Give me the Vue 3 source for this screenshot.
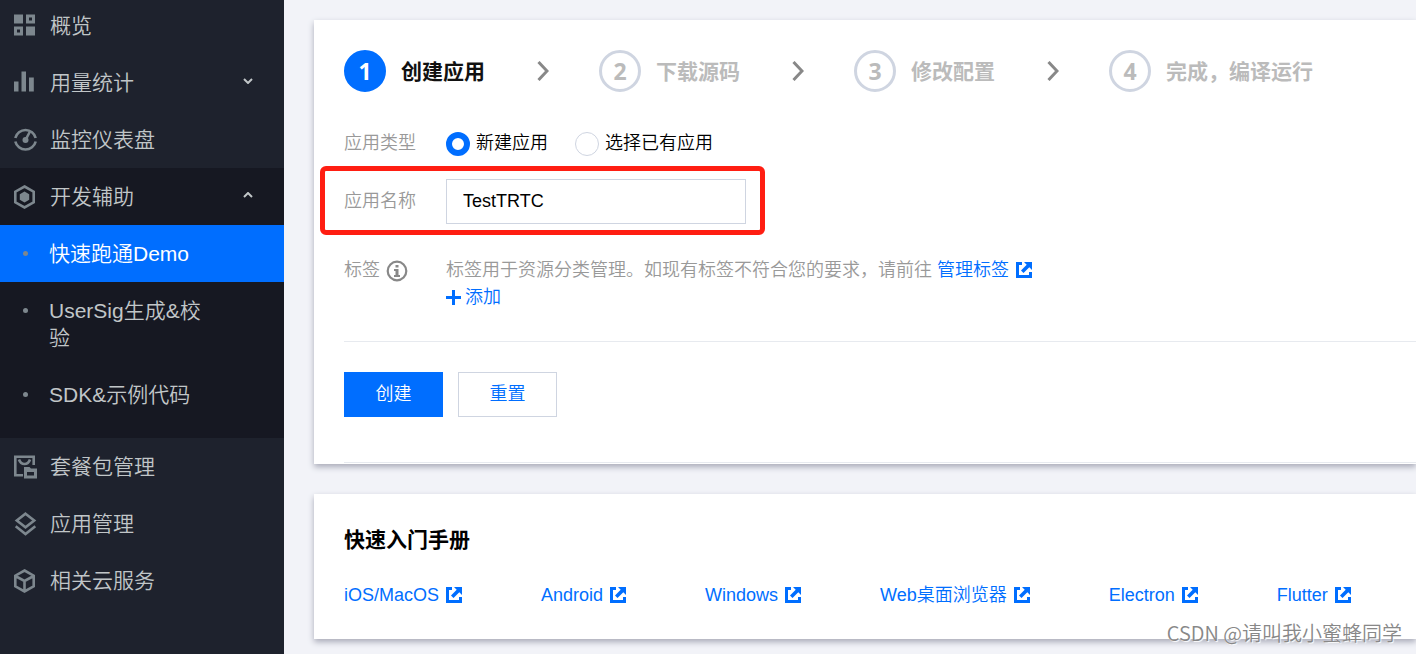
<script setup>
import { ref } from 'vue'

const topItems = [
  { icon: 'grid', text: '概览' },
  { icon: 'bars', text: '用量统计', arrow: true },
  { icon: 'gauge', text: '监控仪表盘' },
]
const subItems = [
  { text: '快速跑通Demo', active: true },
  { text: 'UserSig生成&校验' },
  { text: 'SDK&示例代码' },
]
const bottomItems = [
  { icon: 'package', text: '套餐包管理' },
  { icon: 'layers', text: '应用管理' },
  { icon: 'cube', text: '相关云服务' },
]
const steps = ['创建应用', '下载源码', '修改配置', '完成，编译运行']
const guides = ['iOS/MacOS', 'Android', 'Windows', 'Web桌面浏览器', 'Electron', 'Flutter']
const appType = ref('new')
const appName = ref('TestTRTC')
</script>

<template>
  <div class="page">
    <svg class="defs" aria-hidden="true">
      <symbol id="grid" viewBox="0 0 24 24">
        <path fill="currentColor" fill-rule="evenodd" d="M1 .5h9v9H1zM13 .5h9v9h-9zM16 3.500v3h3v-3zM1 12.500h9v9H1zM4 15.500v3h3v-3zM13 12.500h9v9h-9z" />
      </symbol>
      <symbol id="bars" viewBox="0 0 24 24">
        <path fill="currentColor" d="M1 10.500h4.500v10H1zM8.500 .5H13v20H8.500zM16 6.500h4.800v14H16z" />
      </symbol>
      <symbol id="gauge" viewBox="0 0 24 24">
        <path fill="none" stroke="currentColor" stroke-width="2.600" d="M2.300 10A10.500 10.500 0 0 1 22.700 10M2.300 13.500A10.500 10.500 0 0 0 22.700 13.500" />
        <path fill="none" stroke="currentColor" stroke-width="2.600" d="M12.500 12 17 3.500" />
        <circle cx="12.500" cy="12" r="3" fill="currentColor" />
      </symbol>
      <symbol id="hexagon" viewBox="0 0 24 24">
        <path fill="none" stroke="currentColor" stroke-width="2.600" d="M11.500 1.500 20.700 6.700V17.300L11.500 22.500 2.300 17.300V6.700Z" />
        <path fill="currentColor" d="M11.500 6.500 16.200 9.300V14.700L11.500 17.500 6.800 14.700V9.300Z" />
      </symbol>
      <symbol id="package" viewBox="0 0 24 24">
        <path fill="none" stroke="currentColor" stroke-width="2.600" d="M10 20.200H2.300V1.800H20.700V10" />
        <path fill="none" stroke="currentColor" stroke-width="2.600" d="M6 4.500Q7.500 9 11.500 9T17 4.500" />
        <path fill="currentColor" fill-rule="evenodd" d="M11 12h5.500l1.500 1.500h6V23.500H11zM14 17v3.500h7V17z" />
      </symbol>
      <symbol id="layers" viewBox="0 0 24 24">
        <path fill="none" stroke="currentColor" stroke-width="2.600" d="M12.500 1.700 21.200 8.500 12.500 15.300 3.800 8.500ZM2.700 14.300 12.500 22 22.300 14.300" />
      </symbol>
      <symbol id="cube" viewBox="0 0 24 24">
        <path fill="none" stroke="currentColor" stroke-width="2.600" d="M11.500 1.500 20.700 6.700V17.300L11.500 22.500 2.300 17.300V6.700ZM2.300 7 11.500 12 20.700 7M11.500 12V22" />
      </symbol>
      <symbol id="external" viewBox="0 0 16 16">
        <path fill="currentColor" d="M0 0H6V3H3V13H13V10H16V16H0ZM8 0H16V8L13.300 5.300 7.500 11 5 8.500 10.700 2.700Z" />
      </symbol>
      <symbol id="chevron" viewBox="0 0 10 6">
        <path fill="none" stroke="currentColor" stroke-width="2" d="M1 1 5 5 9 1" />
      </symbol>
    </svg>

    <nav class="sidebar">
      <a v-for="item in topItems" :key="item.text" class="item" href="#">
        <svg class="item-icon"><use :href="'#' + item.icon" /></svg>
        <span>{{ item.text }}</span>
        <svg v-if="item.arrow" class="arrow"><use href="#chevron" /></svg>
      </a>
      <div class="group">
        <a class="item" href="#">
          <svg class="item-icon"><use href="#hexagon" /></svg>
          <span>开发辅助</span>
          <svg class="arrow up"><use href="#chevron" /></svg>
        </a>
        <a v-for="item in subItems" :key="item.text" class="sub" :class="{ active: item.active }" href="#">
          <span class="dot"></span>
          <span class="sub-text">{{ item.text }}</span>
        </a>
      </div>
      <a v-for="item in bottomItems" :key="item.text" class="item" href="#">
        <svg class="item-icon"><use :href="'#' + item.icon" /></svg>
        <span>{{ item.text }}</span>
      </a>
    </nav>

    <main class="main">
      <section class="card">
        <ol class="steps">
          <li v-for="(step, i) in steps" :key="step" class="step" :class="{ current: i === 0 }">
            <span class="num">{{ i + 1 }}</span>
            <span>{{ step }}</span>
            <svg v-if="i < 3" class="next" viewBox="0 0 12 20">
              <path d="M1.500 1 10 10 1.500 19" fill="none" stroke="#888" stroke-width="3" />
            </svg>
          </li>
        </ol>

        <form @submit.prevent>
          <div class="row type-row" role="radiogroup" aria-labelledby="type-label">
            <span id="type-label" class="label">应用类型</span>
            <label class="radio"><input v-model="appType" type="radio" name="type" value="new" />新建应用</label>
            <label class="radio"><input v-model="appType" type="radio" name="type" value="old" />选择已有应用</label>
          </div>
          <div class="row name-row">
            <label class="label" for="app-name">应用名称</label>
            <input id="app-name" v-model="appName" class="text-box" type="text" />
            <span class="highlight"></span>
          </div>
          <div class="row tag-row">
            <span class="label">标签
              <svg class="info" viewBox="0 0 22 22">
                <circle cx="11" cy="11" r="9.300" fill="none" stroke="#888" stroke-width="2.200" />
                <path fill="#888" d="M9.500 5h3v2.500h-3zM8 9h4.500v6H14v2H8v-2h1.500v-4H8z" />
              </svg>
            </span>
            <div class="tag-body">
              <div>标签用于资源分类管理。如现有标签不符合您的要求，请前往 <a href="#">管理标签<svg class="ext"><use href="#external" /></svg></a></div>
              <button type="button" class="add">
                <svg class="plus" viewBox="0 0 15 15"><path d="M7.500 0V15M0 7.500H15" stroke="currentColor" stroke-width="3" /></svg>添加
              </button>
            </div>
          </div>
          <div class="actions">
            <button type="submit" class="btn primary">创建</button>
            <button type="reset" class="btn">重置</button>
          </div>
        </form>
      </section>

      <section class="card guide">
        <h2>快速入门手册</h2>
        <div class="links">
          <a v-for="g in guides" :key="g" href="#">{{ g }}<svg class="ext"><use href="#external" /></svg></a>
        </div>
      </section>
    </main>
    <div class="watermark">CSDN @请叫我小蜜蜂同学</div>
  </div>
</template>

<style>
body {
  background: #f2f3f8;
}
</style>

<style scoped>
.page {
  position: relative;
  display: flex;
  min-height: 100vh;
  overflow: hidden;
  background: #f2f3f8;
  font-family: "Liberation Sans", "Noto Sans CJK SC", sans-serif;
  font-size: 18px;
  font-weight: 350;
  line-height: 27px;
}
.page * {
  box-sizing: border-box;
}
.defs {
  position: absolute;
  width: 0;
  height: 0;
}
a {
  color: #006eff;
  text-decoration: none;
}
button,
input {
  font: inherit;
}
.sidebar {
  flex: 0 0 284px;
  margin-top: -3px;
  background: #1e222d;
  font-size: 21px;
}
.item {
  display: flex;
  align-items: center;
  height: 57px;
  padding: 0 31px 0 13px;
  color: #c1c6c8;
}
.item-icon {
  width: 24px;
  height: 24px;
  margin-right: 13px;
  color: #7d878e;
}
.arrow {
  width: 10px;
  height: 6px;
  margin: 0 0 4px auto;
  color: #c1c6c8;
}
.up {
  transform: rotate(180deg);
}
.group {
  padding-bottom: 15px;
  background: #161822;
}
.sub {
  display: flex;
  padding: 15px 75px 15px 23px;
  color: #c1c6c8;
}
.sub.active {
  background: #006eff;
  color: #fff;
}
.dot {
  flex: none;
  width: 5px;
  height: 5px;
  margin: 11px 21px 0 0;
  border-radius: 50%;
  background: #7d878e;
}
.sub-text {
  word-break: break-all;
}
.main {
  flex: 1;
  min-width: 0;
  padding: 20px 0 15px 30px;
}
.card {
  padding: 30px 0 1px 30px;
  background: #fff;
  box-shadow: 0 3px 6px #a9abb8;
}
.steps {
  display: flex;
  margin: 0;
  padding: 0;
  list-style: none;
}
.step {
  display: flex;
  align-items: center;
  color: #bbb;
  font-size: 21px;
  font-weight: 700;
  white-space: nowrap;
}
.step.current {
  color: #111;
}
.num {
  display: flex;
  align-items: center;
  justify-content: center;
  width: 42px;
  height: 42px;
  margin-right: 15px;
  border: 3px solid #cfd5e1;
  border-radius: 50%;
  font-family: "Open Sans", sans-serif;
  font-size: 23px;
}
.current .num {
  border-color: #006eff;
  background: #006eff;
  color: #fff;
}
.next {
  width: 12px;
  height: 20px;
  margin: 0 50px 0 52px;
}
.row {
  position: relative;
  display: flex;
  align-items: center;
}
.label {
  flex: 0 0 102px;
  color: #999;
}
.type-row {
  margin-top: 38px;
}
.radio {
  display: flex;
  align-items: center;
  margin-right: 27px;
  color: #000;
}
.radio input {
  appearance: none;
  width: 24px;
  height: 24px;
  margin: 0 6px 0 0;
  border: 1px solid #cfd5e1;
  border-radius: 50%;
  background: #fff;
}
.radio input:checked {
  border: 6px solid #006eff;
}
.name-row {
  margin-top: 22px;
}
.text-box {
  width: 300px;
  height: 45px;
  padding: 0 16px;
  border: 1px solid #cfd5e1;
  border-radius: 0;
  background: #fff;
  color: #000;
}
.highlight {
  position: absolute;
  top: -13px;
  left: -24px;
  width: 445px;
  height: 69px;
  border: 5px solid #ff1e12;
  border-radius: 6px;
  pointer-events: none;
}
.tag-row {
  align-items: flex-start;
  margin-top: 33px;
  color: #999;
}
.tag-row .label {
  display: flex;
  align-items: center;
}
.info {
  width: 22px;
  height: 22px;
  margin-left: 6px;
}
.ext {
  width: 16px;
  height: 16px;
  margin-left: 7px;
  vertical-align: -2px;
}
.add {
  display: flex;
  align-items: center;
  gap: 4px;
  padding: 0;
  border: 0;
  background: none;
  color: #006eff;
}
.plus {
  width: 15px;
  height: 15px;
}
.actions {
  display: flex;
  gap: 15px;
  margin-top: 30px;
  padding: 30px 0 45px;
  border-top: 1px solid #e7eaef;
  border-bottom: 1px solid #e7eaef;
}
.btn {
  width: 99px;
  height: 45px;
  padding: 0;
  border: 1px solid #cfd5e1;
  background: #fff;
  color: #006eff;
}
.btn.primary {
  border-color: #006eff;
  background: #006eff;
  color: #fff;
}
.guide {
  margin-top: 30px;
  padding: 32px 0 30px 30px;
}
h2 {
  margin: 0;
  color: #000;
  font-size: 21px;
  line-height: 28px;
}
.links {
  display: flex;
  gap: 79px;
  margin-top: 28px;
  white-space: nowrap;
}
.watermark {
  position: absolute;
  right: 14px;
  bottom: 8px;
  color: #888;
  font-family: "Noto Sans CJK SC", sans-serif;
  font-size: 20px;
  text-shadow: 1px 1px 1px #fff;
}
</style>
